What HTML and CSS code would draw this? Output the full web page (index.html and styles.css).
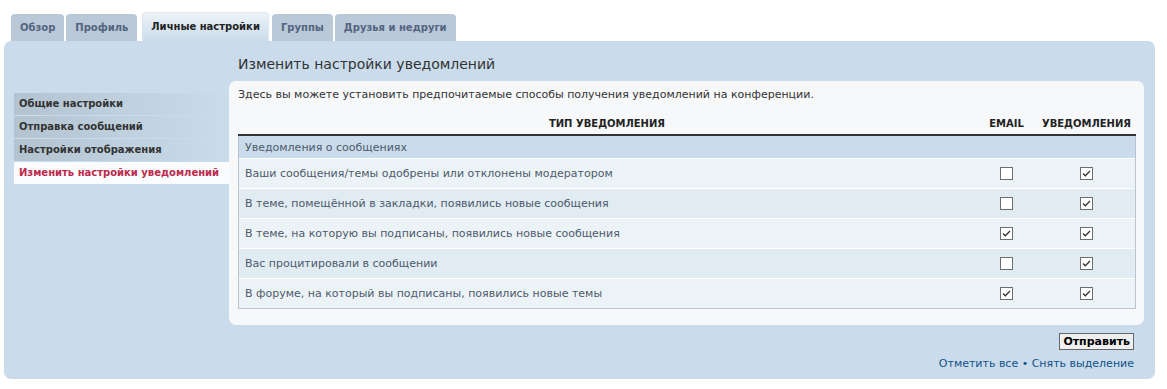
FILE: index.html
```html
<!DOCTYPE html>
<html lang="ru">
<head>
    <meta charset="UTF-8">
    <title>Личный раздел — Изменить настройки уведомлений</title>
    <link rel="stylesheet" href="styles.css">
</head>
<body>
    <div class="tabs">
        <a class="tab" href="#">Обзор</a>
        <a class="tab" href="#">Профиль</a>
        <a class="tab active" href="#">Личные настройки</a>
        <a class="tab" href="#">Группы</a>
        <a class="tab" href="#">Друзья и недруги</a>
    </div>

    <div class="panel">
        <div class="menu">
            <a class="menu-item" href="#">Общие настройки</a>
            <a class="menu-item" href="#">Отправка сообщений</a>
            <a class="menu-item" href="#">Настройки отображения</a>
            <a class="menu-item current" href="#">Изменить настройки уведомлений</a>
        </div>

        <div class="main">
            <h2 class="title">Изменить настройки уведомлений</h2>
            <div class="box">
                <p class="intro">Здесь вы можете установить предпочитаемые способы получения уведомлений на конференции.</p>
                <table class="table">
                    <thead>
                        <tr>
                            <th>ТИП УВЕДОМЛЕНИЯ</th>
                            <th class="col-mark col-email">EMAIL</th>
                            <th class="col-mark col-notify">УВЕДОМЛЕНИЯ</th>
                        </tr>
                    </thead>
                    <tbody>
                        <tr class="section">
                            <td colspan="3">Уведомления о сообщениях</td>
                        </tr>
                        <tr class="bg1">
                            <td>Ваши сообщения/темы одобрены или отклонены модератором</td>
                            <td class="col-mark"><span class="check"></span></td>
                            <td class="col-mark"><span class="check on"><svg viewBox="0 0 11 11"><path d="M2 5.5 L4.3 7.8 L9 3"/></svg></span></td>
                        </tr>
                        <tr class="bg2">
                            <td>В теме, помещённой в закладки, появились новые сообщения</td>
                            <td class="col-mark"><span class="check"></span></td>
                            <td class="col-mark"><span class="check on"><svg viewBox="0 0 11 11"><path d="M2 5.5 L4.3 7.8 L9 3"/></svg></span></td>
                        </tr>
                        <tr class="bg1">
                            <td>В теме, на которую вы подписаны, появились новые сообщения</td>
                            <td class="col-mark"><span class="check on"><svg viewBox="0 0 11 11"><path d="M2 5.5 L4.3 7.8 L9 3"/></svg></span></td>
                            <td class="col-mark"><span class="check on"><svg viewBox="0 0 11 11"><path d="M2 5.5 L4.3 7.8 L9 3"/></svg></span></td>
                        </tr>
                        <tr class="bg2">
                            <td>Вас процитировали в сообщении</td>
                            <td class="col-mark"><span class="check"></span></td>
                            <td class="col-mark"><span class="check on"><svg viewBox="0 0 11 11"><path d="M2 5.5 L4.3 7.8 L9 3"/></svg></span></td>
                        </tr>
                        <tr class="bg1">
                            <td>В форуме, на который вы подписаны, появились новые темы</td>
                            <td class="col-mark"><span class="check on"><svg viewBox="0 0 11 11"><path d="M2 5.5 L4.3 7.8 L9 3"/></svg></span></td>
                            <td class="col-mark"><span class="check on"><svg viewBox="0 0 11 11"><path d="M2 5.5 L4.3 7.8 L9 3"/></svg></span></td>
                        </tr>
                    </tbody>
                </table>
            </div>
            <div class="actions">
                <button class="button">Отправить</button>
                <div class="links">
                    <a href="#">Отметить все</a> &bull; <a href="#">Снять выделение</a>
                </div>
            </div>
        </div>
    </div>
</body>
</html>
```

FILE: styles.css
```css
body {
    margin: 0;
    padding: 0 12px 0 4px;
    font-family: "DejaVu Sans", Verdana, sans-serif;
    font-size: 11px;
    color: #333;
    background-color: #fff;
}
a {
    text-decoration: none;
}
.tabs {
    display: flex;
    align-items: flex-end;
    gap: 2px;
    padding: 12px 0 0 7px;
    height: 41px;
    box-sizing: border-box;
}
.tab {
    display: block;
    height: 27px;
    line-height: 27px;
    padding: 0 9px;
    font-size: 10px;
    font-weight: bold;
    color: #536482;
    background-color: #b9c9d7;
    border-radius: 4px 4px 0 0;
    box-sizing: border-box;
}
.tab.active {
    height: 29px;
    line-height: 27px;
    margin: 0 1px 0 3px;
    padding: 0 8px;
    color: #222;
    background: linear-gradient(to bottom, #ecf3f8 0%, #cadceb 100%);
    border: 1px solid #dbe6ef;
    border-bottom: none;
}
.panel {
    display: flex;
    background-color: #cadceb;
    border-radius: 7px;
    padding: 0 11px 7px 10px;
}
.menu {
    width: 215px;
    flex-shrink: 0;
    margin-top: 52px;
    display: flex;
    flex-direction: column;
    gap: 1px;
}
.menu-item {
    display: block;
    height: 22px;
    line-height: 22px;
    padding-left: 5px;
    font-size: 10px;
    font-weight: bold;
    white-space: nowrap;
    color: #333;
    background: linear-gradient(to right, #b3c3d0 0%, #cadceb 100%);
}
.menu-item.current {
    color: #bc2a4d;
    background: #fafbfc;
}
.main {
    flex: 1;
    display: flex;
    flex-direction: column;
}
.title {
    margin: 0;
    padding: 15px 0 0 9px;
    height: 40px;
    box-sizing: border-box;
    font-size: 14px;
    font-weight: normal;
    color: #333;
}
.box {
    background-color: #f7f8f9;
    border-radius: 7px;
    padding: 6px 8px 16px 9px;
}
.intro {
    margin: 0 0 6px 0;
    line-height: 16px;
}
.table {
    width: 100%;
    border-collapse: collapse;
    color: #4c5a6c;
}
.table th {
    height: 22px;
    padding: 3px 0 0 0;
    font-size: 10px;
    font-weight: bold;
    color: #222;
    border-bottom: 2px solid #333;
}
.table td {
    padding: 0 0 0 6px;
    border-top: 1px solid #fff;
    border-left: 1px solid #b9c4cf;
}
.table td.col-mark {
    border-left: none;
    padding: 0;
    text-align: center;
}
.table td:last-child {
    border-right: 1px solid #b9c4cf;
}
.table tr.section td {
    height: 22px;
    background-color: #cadceb;
    border-top: none;
}
.table tr.bg1 td,
.table tr.bg2 td {
    height: 29px;
}
.table tr.bg1 {
    background-color: #ecf3f7;
}
.table tr.bg2 {
    background-color: #e1ebf2;
}
.table tbody tr:last-child td {
    border-bottom: 1px solid #b9c4cf;
}
.col-email {
    width: 62px;
}
.col-notify {
    width: 98px;
}
.check {
    display: inline-block;
    width: 11px;
    height: 11px;
    border: 1px solid #6e6e6e;
    background-color: #fff;
    vertical-align: middle;
}
.check svg {
    display: block;
    width: 11px;
    height: 11px;
}
.check path {
    fill: none;
    stroke: #333;
    stroke-width: 1.3;
}
.actions {
    text-align: right;
    padding: 8px 10px 0 0;
}
.button {
    font-family: "DejaVu Sans", Verdana, sans-serif;
    font-size: 11px;
    font-weight: bold;
    color: #000;
    background-color: #efefef;
    border: 1px solid #666;
    padding: 1px 3px;
    margin: 0;
}
.links {
    margin-top: 6px;
    line-height: 16px;
    color: #105289;
}
.links a {
    color: #105289;
}
```
